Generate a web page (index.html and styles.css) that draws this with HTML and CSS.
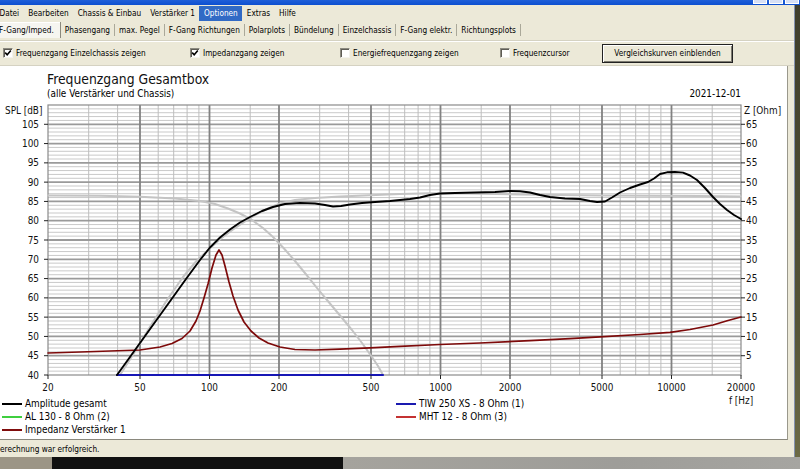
FILE: index.html
```html
<!DOCTYPE html>
<html lang="de">
<head>
<meta charset="utf-8">
<title>Frequenzgang Gesamtbox</title>
<link rel="stylesheet" href="styles.css">
</head>
<body>
<div class="titlebar">
  <div class="tb-buttons"><span></span><span></span><span></span></div>
</div>
<div class="main">
  <div class="window">
    <nav class="menubar">
      <span class="menu">Datei</span>
      <span class="menu">Bearbeiten</span>
      <span class="menu">Chassis &amp; Einbau</span>
      <span class="menu">Verstärker 1</span>
      <span class="menu hl">Optionen</span>
      <span class="menu">Extras</span>
      <span class="menu">Hilfe</span>
    </nav>
    <div class="tabs">
      <span class="tab active">F-Gang/Imped.</span>
      <span class="tab">Phasengang</span>
      <span class="tab">max. Pegel</span>
      <span class="tab">F-Gang Richtungen</span>
      <span class="tab">Polarplots</span>
      <span class="tab">Bündelung</span>
      <span class="tab">Einzelchassis</span>
      <span class="tab">F-Gang elektr.</span>
      <span class="tab">Richtungsplots</span>
    </div>
    <div class="options">
      <label class="opt"><span class="box"><svg viewBox="0 0 8 8" width="8" height="8"><polyline points="1.2,3.6 3.2,5.8 6.8,1.6" /></svg></span>Frequenzgang Einzelchassis zeigen</label>
      <label class="opt"><span class="box"><svg viewBox="0 0 8 8" width="8" height="8"><polyline points="1.2,3.6 3.2,5.8 6.8,1.6" /></svg></span>Impedanzgang zeigen</label>
      <label class="opt"><span class="box"></span>Energiefrequenzgang zeigen</label>
      <label class="opt"><span class="box"></span>Frequenzcursor</label>
      <button class="btn">Vergleichskurven einblenden</button>
    </div>
    <section class="chart">
      <div class="chart-title">Frequenzgang Gesamtbox</div>
      <div class="chart-sub"><span>(alle Verstärker und Chassis)</span><span>2021-12-01</span></div>
      <svg class="plot" width="787" height="297" viewBox="0 100 787 297">
        <path class="g-minor" d="M48 371.14H741M48 367.29H741M48 363.43H741M48 359.57H741M48 351.86H741M48 348H741M48 344.14H741M48 340.29H741M48 332.57H741M48 328.71H741M48 324.86H741M48 321H741M48 313.29H741M48 309.43H741M48 305.57H741M48 301.71H741M48 294H741M48 290.14H741M48 286.29H741M48 282.43H741M48 274.71H741M48 270.86H741M48 267H741M48 263.14H741M48 255.43H741M48 251.57H741M48 247.71H741M48 243.86H741M48 236.14H741M48 232.29H741M48 228.43H741M48 224.57H741M48 216.86H741M48 213H741M48 209.14H741M48 205.29H741M48 197.57H741M48 193.71H741M48 189.86H741M48 186H741M48 178.29H741M48 174.43H741M48 170.57H741M48 166.71H741M48 159H741M48 155.14H741M48 151.29H741M48 147.43H741M48 139.71H741M48 135.86H741M48 132H741M48 128.14H741M48 120.43H741M48 116.57H741M48 112.71H741M48 108.86H741"/>
        <path class="g-vminor" d="M88.7 105V375M117.6 105V375M158.2 105V375M173.7 105V375M187.1 105V375M198.9 105V375M250.2 105V375M319.7 105V375M348.6 105V375M389.2 105V375M404.7 105V375M418.1 105V375M429.9 105V375M481.2 105V375M550.7 105V375M579.6 105V375M620.2 105V375M635.7 105V375M649.1 105V375M660.9 105V375M712.2 105V375"/>
        <path class="g-major" d="M48 355.71H741M48 336.43H741M48 317.14H741M48 297.86H741M48 278.57H741M48 259.29H741M48 240H741M48 220.71H741M48 201.43H741M48 182.14H741M48 162.86H741M48 143.57H741M48 124.29H741"/>
        <path class="g-vmajor" d="M140 105V375M209.5 105V375M279 105V375M371 105V375M440.5 105V375M510 105V375M602 105V375M671.5 105V375"/>
        <rect class="frame" x="48" y="105" width="693" height="270"/>

        <path class="c-gray" d="M48 195.5L100 195.8L140 196.8L175 198.5L200 201L215 204L228 208.5L240 213.5L252 220L263 228L273 237L284 248.5L295 261L307 275.5L317 288L327 300L340 315.5L352 330L362 343L372 357L378 366L383 375"/>
        <path class="c-gray" d="M120 375L136 350L152 323.5L168 298.5L183 277L196 261.5L209 249L221 238.5L233 229.5L245 221.5L256 214.5L268 208.5L280 203.5L295 200L315 198L340 196.5L370 195.3L400 194L430 193.3L470 193.5L520 194.5L600 195.5L700 196L741 196.5"/>
        <path class="c-blue" d="M117 375H383"/>
        <path class="c-red" d="M48 353L80 352L110 351L140 350L160 347L172 343.5L182 338.5L190 331L196 321L200 311L204 298L208 284L212 268L216 255L219 250L222 255L225 266L229 282L233 296L238 310L244 322L251 331L259 338L268 343L280 347L295 349.5L315 350L340 349.2L370 347.8L400 346.3L440 344.5L480 343L530 340.7L570 338.7L600 336.8L640 334.5L670 332.3L690 329.5L713 325L728 320.5L741 317"/>
        <path class="c-black" d="M117 375L128 359.8L140 343L156 320.8L172 298.5L186 279L200 260L210 247.5L220 237.5L230 229.5L240 222.5L250 217L262 211L273 207L285 204L300 203L315 203.5L325 205L333 206.5L341 206L350 204.5L362 203L375 202L390 201L400 200L410 199L420 197.5L430 195L440 193.5L455 193L475 192.5L495 192L510 191L520 191.3L530 192.5L540 195L550 197L565 198.5L580 199L590 201L597 202L605 201.5L612 197.5L620 192.5L630 188L640 184.5L648 182L654 178.5L660 174L667 172.3L675 172L683 172.6L690 175.5L697 180L705 188L713 197L720 204L727 210L734 215L741 219"/>

        <path class="tick" d="M44 375H48M44 355.71H48M44 336.43H48M44 317.14H48M44 297.86H48M44 278.57H48M44 259.29H48M44 240H48M44 220.71H48M44 201.43H48M44 182.14H48M44 162.86H48M44 143.57H48M44 124.29H48"/>
        <path class="tick" d="M741 355.71H745M741 336.43H745M741 317.14H745M741 297.86H745M741 278.57H745M741 259.29H745M741 240H745M741 220.71H745M741 201.43H745M741 182.14H745M741 162.86H745M741 143.57H745M741 124.29H745"/>
        <path class="tick" d="M48 375V379M140 375V379M209.5 375V379M279 375V379M371 375V379M440.5 375V379M510 375V379M602 375V379M671.5 375V379M741 375V379"/>

        <g class="lbl">
          <text x="5" y="114">SPL [dB]</text>
          <text x="744" y="114">Z [Ohm]</text>
        </g>
        <g class="lbl yl">
          <text x="39" y="378.5">40</text>
          <text x="39" y="359.2">45</text>
          <text x="39" y="339.9">50</text>
          <text x="39" y="320.6">55</text>
          <text x="39" y="301.4">60</text>
          <text x="39" y="282.1">65</text>
          <text x="39" y="262.8">70</text>
          <text x="39" y="243.5">75</text>
          <text x="39" y="224.2">80</text>
          <text x="39" y="204.9">85</text>
          <text x="39" y="185.6">90</text>
          <text x="39" y="166.4">95</text>
          <text x="39" y="147.1">100</text>
          <text x="39" y="127.8">105</text>
        </g>
        <g class="lbl">
          <text x="746" y="359.2">5</text>
          <text x="746" y="339.9">10</text>
          <text x="746" y="320.6">15</text>
          <text x="746" y="301.4">20</text>
          <text x="746" y="282.1">25</text>
          <text x="746" y="262.8">30</text>
          <text x="746" y="243.5">35</text>
          <text x="746" y="224.2">40</text>
          <text x="746" y="204.9">45</text>
          <text x="746" y="185.6">50</text>
          <text x="746" y="166.4">55</text>
          <text x="746" y="147.1">60</text>
          <text x="746" y="127.8">65</text>
        </g>
        <g class="lbl xl">
          <text x="48" y="391">20</text>
          <text x="140" y="391">50</text>
          <text x="209.5" y="391">100</text>
          <text x="279" y="391">200</text>
          <text x="371" y="391">500</text>
          <text x="440.5" y="391">1000</text>
          <text x="510" y="391">2000</text>
          <text x="602" y="391">5000</text>
          <text x="671.5" y="391">10000</text>
          <text x="741" y="391">20000</text>
          <text x="741" y="403.5">f [Hz]</text>
        </g>
      </svg>
      <div class="legend">
        <div class="leg"><i class="ln black"></i>Amplitude gesamt</div>
        <div class="leg"><i class="ln blue"></i>TIW 250 XS - 8 Ohm (1)</div>
        <div class="leg"><i class="ln green"></i>AL 130 - 8 Ohm (2)</div>
        <div class="leg"><i class="ln red"></i>MHT 12 - 8 Ohm (3)</div>
        <div class="leg"><i class="ln dred"></i>Impedanz Verstärker 1</div>
      </div>
    </section>
    <footer class="statusbar">erechnung war erfolgreich.</footer>
  </div>
  <div class="edge"></div>
</div>
<div class="taskbar"><span class="tk-a"></span><span class="tk-b"></span><span class="tk-c"></span></div>
</body>
</html>
```
FILE: styles.css
```css
html, body {
  margin: 0;
  padding: 0;
}
body {
  width: 800px;
  height: 469px;
  overflow: hidden;
  background: #4a4935;
  font-family: "DejaVu Sans Condensed", "DejaVu Sans", sans-serif;
  font-stretch: condensed;
  font-size: 8.2px;
  color: #000;
}

/* title bar remnant */
.titlebar {
  height: 5px;
  background: linear-gradient(#1f5fd8, #0d4fd0);
  display: flex;
  justify-content: flex-end;
}
.tb-buttons {
  display: flex;
  gap: 2px;
  padding-right: 1px;
}
.tb-buttons span {
  width: 14px;
  height: 4px;
  background: #d6dff5;
  border: 1px solid #fff;
  border-top: 0;
  box-sizing: border-box;
}

.main {
  display: flex;
  height: 452px;
}
.window {
  width: 794px;
  background: #ece9d8;
  display: flex;
  flex-direction: column;
  overflow: hidden;
  border-right: 1px solid #8592ae;
}
.edge {
  flex: 1;
  background: linear-gradient(#3f3e2c, #555436 70%, #6c6a45);
}

/* menu */
.menubar {
  display: flex;
  height: 15px;
  margin-top: 1px;
  margin-left: -5px;
  line-height: 15px;
}
.menu {
  padding: 0 4.5px;
  white-space: nowrap;
}
.menu.hl {
  background: #316ac5;
  color: #fff;
}

/* tabs */
.tabs {
  display: flex;
  align-items: center;
  height: 16px;
  margin-top: 1px;
  margin-left: -1px;
}
.tab {
  padding: 0 4px;
  height: 12px;
  line-height: 12px;
  border-right: 1px solid #aaa899;
  white-space: nowrap;
}
.tab.active {
  padding: 0 6px 0 0;
  height: 16px;
  line-height: 16px;
  background: #f6f5f0;
  border-right: 1px solid #8b897c;
  box-shadow: inset 0 1px #fff;
}

/* options row */
.options {
  margin-top: 2px;
  height: 24px;
  display: grid;
  grid-template-columns: 187px 150px 160px 102px 131px;
  align-items: center;
  padding-left: 3px;
  border-top: 1px solid #d5d2c2;
  border-bottom: 1px solid #d5d2c2;
  box-shadow: inset 0 1px #fff;
}
.opt {
  display: flex;
  align-items: center;
  white-space: nowrap;
}
.box {
  width: 10px;
  height: 10px;
  box-sizing: border-box;
  background: #fff;
  border: 1px solid;
  border-color: #8c8a80 #f4f3ee #f4f3ee #8c8a80;
  box-shadow: inset 1px 1px #5e5c55;
  margin-right: 3px;
  display: flex;
  align-items: center;
  justify-content: center;
}
.box svg polyline {
  fill: none;
  stroke: #000;
  stroke-width: 1.6;
}
.btn {
  height: 19px;
  margin: 0;
  padding: 0;
  font: inherit;
  font-stretch: condensed;
  color: #000;
  background: #ece9d8;
  border: 1px solid #222;
  box-shadow: inset 1px 1px #fff, inset -1px -1px #7c7a70;
}

/* chart panel */
.chart {
  width: 787px;
  height: 368px;
  background: #fff;
  border-right: 1px solid #9a988c;
  border-bottom: 1px solid #8a887d;
  padding-top: 5px;
}
.chart-title {
  font-size: 13.8px;
  line-height: 17px;
  padding-left: 47px;
  color: #111;
}
.chart-sub {
  display: flex;
  justify-content: space-between;
  width: 694px;
  margin-left: 47px;
  font-size: 9.9px;
  line-height: 12px;
}
.plot {
  display: block;
  overflow: visible;
}
.g-minor { stroke: #c9c9c9; stroke-width: 1; fill: none; }
.g-vminor { stroke: #bdbdbd; stroke-width: 1; fill: none; }
.g-major { stroke: #9a9a9a; stroke-width: 1.8; fill: none; }
.g-vmajor { stroke: #828282; stroke-width: 1.8; fill: none; }
.frame { fill: none; stroke: #8a8a8a; stroke-width: 1.2; }
.c-gray, .c-blue, .c-red, .c-black {
  fill: none;
  stroke-linejoin: round;
  stroke-linecap: round;
}
.c-gray { stroke: #c4c4c4; stroke-width: 2; }
.c-blue { stroke: #1717b5; stroke-width: 2.2; }
.c-red { stroke: #7d0a0a; stroke-width: 1.7; }
.c-black { stroke: #000; stroke-width: 1.9; }
.tick { stroke: #222; stroke-width: 1; fill: none; }
.lbl text {
  font-family: "DejaVu Sans Condensed", "DejaVu Sans", sans-serif;
  font-stretch: condensed;
  font-size: 9.9px;
  fill: #111;
}
.yl text { text-anchor: end; }
.xl text { text-anchor: middle; }

/* legend */
.legend {
  display: grid;
  grid-template-columns: 394px 200px;
  padding-left: 2px;
  font-size: 9.9px;
  line-height: 13px;
}
.leg {
  display: flex;
  align-items: center;
  white-space: nowrap;
}
.ln {
  width: 20px;
  height: 2px;
  margin-right: 3px;
}
.ln.black { background: #000; }
.ln.blue { background: #1a1ab0; }
.ln.green { background: #3fcf3f; }
.ln.red { background: #c43232; }
.ln.dred { background: #800d0d; }

/* status bar */
.statusbar {
  height: 16px;
  line-height: 16px;
  margin-top: 1px;
  white-space: nowrap;
}

/* bottom strip */
.taskbar {
  display: flex;
  height: 12px;
}
.tk-a { width: 52px; background: #9c9586; }
.tk-b { width: 291px; background: #111; }
.tk-c { flex: 1; background: linear-gradient(90deg, #a5a39d, #9e9d99 60%, #a6a5a1); }
```
